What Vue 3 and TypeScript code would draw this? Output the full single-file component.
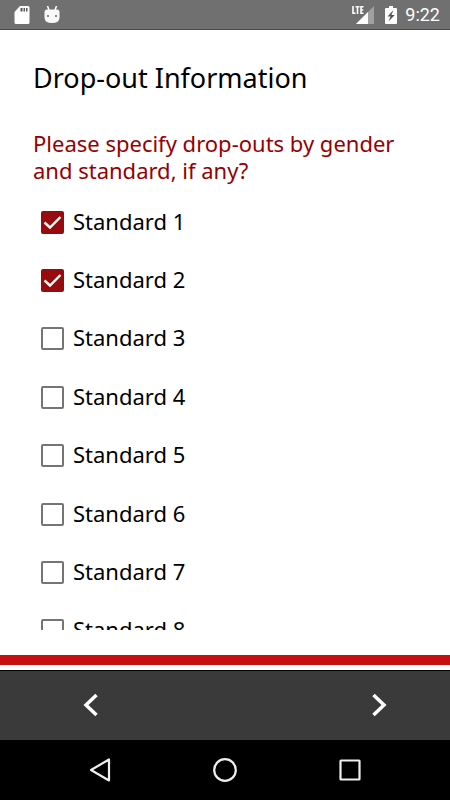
<script setup lang="ts">
import { ref } from 'vue'

interface Standard {
  id: number
  label: string
  checked: boolean
}

const standards = ref<Standard[]>(
  Array.from({ length: 8 }, (_, i) => ({
    id: i + 1,
    label: `Standard ${i + 1}`,
    checked: i < 2,
  })),
)
</script>

<template>
  <div class="screen">
    <header class="status">
      <div class="status-group">
        <svg width="16" height="18" viewBox="0 0 16 18" aria-hidden="true">
          <path d="M6 0h8a1.500 1.500 0 0 1 1.500 1.500v15A1.500 1.500 0 0 1 14 18H2a1.500 1.500 0 0 1-1.500-1.500V6z" fill="#fff" />
          <path d="M6.500 2h2v3.500h-2zM9.500 2h1.500v3.500H9.500zM12 2h1.500v3.500H12z" fill="#555" />
        </svg>
        <svg class="android" width="16" height="18" viewBox="0 0 16 18" aria-hidden="true">
          <path d="M3.500 0L5 4M12.500 0L11 4" stroke="#fff" stroke-width="1.500" />
          <path d="M.5 6Q.5 3.500 3 3.500h10q2.500 0 2.500 2.500v5.500q0 5.500-7.500 5.500T.5 11.500z" fill="#f8f8f8" />
          <path d="M3 9h2v2H3zM11 9h2v2h-2z" fill="#888" />
        </svg>
      </div>
      <div class="status-group">
        <svg width="23" height="18" viewBox="0 0 23 18" aria-hidden="true">
          <path d="M22 0v18H4z" fill="#a0a0a0" />
          <path d="M16 6v12H4z" fill="#fff" />
          <path d="M0 0h12v9H0z" fill="#707070" />
          <path d="M1 0v7.300h2.500M3.500 .8h4M5.500 .8V8M11.500 .8H9v6.500h2.500M9 4h2.200" fill="none" stroke="#fff" stroke-width="1.600" />
        </svg>
        <svg class="battery" width="12" height="18" viewBox="0 0 12 18" aria-hidden="true">
          <path d="M4 0h4v2h3q1 0 1 1v14q0 1-1 1H1q-1 0-1-1V3q0-1 1-1h3z" fill="#fff" />
          <path d="M8.500 4L2.500 10.500H5.500L3.500 15.500L9.800 9H6.500z" fill="#555" />
        </svg>
        <time class="clock">9:22</time>
      </div>
    </header>

    <main class="content">
      <h1>Drop-out Information</h1>
      <fieldset>
        <legend>Please specify drop-outs by gender and standard, if any?</legend>
        <div class="options">
          <label v-for="item in standards" :key="item.id" class="option">
            <input v-model="item.checked" type="checkbox" />
            <svg class="box" viewBox="0 0 23 23" aria-hidden="true">
              <template v-if="item.checked">
                <rect width="23" height="23" rx="2" fill="#970b0e" />
                <path d="M3.500 11.500l5.500 5L19.500 6" fill="none" stroke="#fff" stroke-width="2.400" />
              </template>
              <rect v-else x="1" y="1" width="21" height="21" rx="1" fill="none" stroke="#757575" stroke-width="2" />
            </svg>
            <span class="name">{{ item.label }}</span>
          </label>
        </div>
      </fieldset>
    </main>

    <div class="progress"></div>

    <nav class="pager">
      <button type="button" aria-label="Previous">
        <svg width="16" height="24" viewBox="0 0 16 24" aria-hidden="true">
          <path d="M13.500 2L3 12l10.500 10" />
        </svg>
      </button>
      <button type="button" aria-label="Next">
        <svg width="16" height="24" viewBox="0 0 16 24" aria-hidden="true">
          <path d="M2.500 2L13 12L2.500 22" />
        </svg>
      </button>
    </nav>

    <nav class="system">
      <button type="button" aria-label="Back">
        <svg width="24" height="24" viewBox="0 0 24 24" aria-hidden="true">
          <path d="M21 1.500v21L3 12z" />
        </svg>
      </button>
      <button type="button" aria-label="Home">
        <svg width="24" height="24" viewBox="0 0 24 24" aria-hidden="true">
          <circle cx="12" cy="12" r="10.800" />
        </svg>
      </button>
      <button type="button" aria-label="Overview">
        <svg width="24" height="24" viewBox="0 0 24 24" aria-hidden="true">
          <rect x="2.500" y="2.500" width="19" height="19" rx="0.500" />
        </svg>
      </button>
    </nav>
  </div>
</template>

<style>
body {
  background: #fff;
}
</style>

<style scoped>
.screen {
  display: flex;
  flex-direction: column;
  height: 100vh;
  background: #fff;
  color: #000;
  font-family: "Noto Sans", sans-serif;
}

.status {
  box-sizing: border-box;
  flex: none;
  display: flex;
  align-items: center;
  justify-content: space-between;
  height: 30px;
  padding: 0 10px 0 14px;
  border-bottom: 1px solid #4c484b;
  background: #707070;
}

.status-group {
  display: flex;
  align-items: center;
}

.android {
  margin-left: 14px;
}

.battery {
  margin: 0 8px 0 10px;
}

.clock {
  color: #fff;
  font: 18px/28px Roboto, sans-serif;
}

.content {
  flex: 1;
  min-height: 0;
  margin-bottom: 25px;
  padding: 0 33px;
  overflow: hidden;
}

h1 {
  margin: 28px 0 32px;
  font-size: 27px;
  font-weight: 400;
  line-height: 40px;
}

fieldset {
  margin: 0;
  padding: 0;
  border: 0;
}

legend {
  padding: 0;
  color: #960000;
  font-size: 22px;
  line-height: 27px;
}

.options {
  display: grid;
  grid-auto-rows: 1fr;
  height: 467px;
  margin-top: 9px;
  padding-left: 8px;
}

.option {
  position: relative;
  display: flex;
  align-items: center;
  gap: 9px;
  font-size: 22px;
  line-height: 30px;
}

.option input {
  position: absolute;
  width: 23px;
  height: 23px;
  margin: 0;
  opacity: 0;
}

.box {
  flex: none;
  width: 23px;
  height: 23px;
}

.name {
  padding-bottom: 3px;
}

.option input:focus-visible + .box {
  outline: 2px solid #c70f0f;
  outline-offset: 2px;
}

.progress {
  flex: none;
  height: 10px;
  margin-bottom: 5px;
  background: #c70f0f;
}

.pager,
.system {
  box-sizing: border-box;
  flex: none;
  display: flex;
}

.pager {
  justify-content: space-between;
  height: 70px;
  padding: 0 47px 1px 67px;
  border-top: 1px solid #000;
  background: #3a3a3a;
}

.system {
  height: 60px;
  padding: 0 37px;
  background: #000;
}

button {
  display: flex;
  align-items: center;
  justify-content: center;
  width: 48px;
  margin: 0;
  padding: 0;
  border: 0;
  background: transparent;
}

.system button {
  flex: 1;
}

button svg {
  fill: none;
  stroke: #fff;
  stroke-width: 3.500;
}

.system svg {
  stroke: #eee;
  stroke-width: 2.200;
  stroke-linejoin: round;
}
</style>
